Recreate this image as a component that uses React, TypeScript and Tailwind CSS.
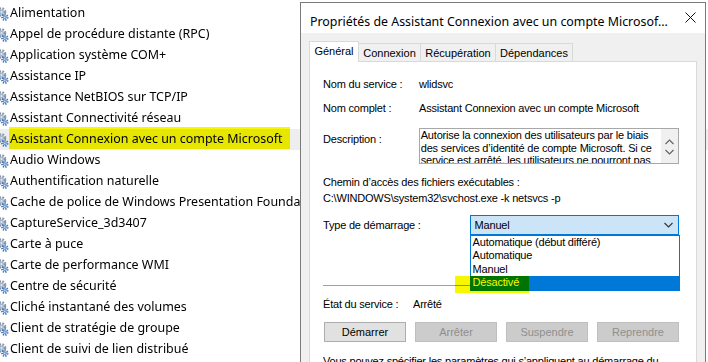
import React from 'react';

const services = [
  'Alimentation',
  'Appel de procédure distante (RPC)',
  'Application système COM+',
  'Assistance IP',
  'Assistance NetBIOS sur TCP/IP',
  'Assistant Connectivité réseau',
  'Assistant Connexion avec un compte Microsoft',
  'Audio Windows',
  'Authentification naturelle',
  'Cache de police de Windows Presentation Foundation 3.0.0.0',
  'CaptureService_3d3407',
  'Carte à puce',
  'Carte de performance WMI',
  'Centre de sécurité',
  'Cliché instantané des volumes',
  'Client de stratégie de groupe',
  'Client de suivi de lien distribué',
];

const startupTypes = ['Automatique (début différé)', 'Automatique', 'Manuel', 'Désactivé'];

const ui = { fontFamily: '"Liberation Sans", Arial, sans-serif' };
const segoe = { fontFamily: '"Noto Sans", "Open Sans", sans-serif' };

function GearIcon() {
  return (
    <svg width="9" height="16" viewBox="0 0 9 16" className="shrink-0">
      <circle cx="1.5" cy="6" r="3.6" fill="none" stroke="#8094ae" strokeWidth="2.4" strokeDasharray="1.6 1.3" />
      <circle cx="1.5" cy="6" r="2.6" fill="#a9b6c8" />
      <circle cx="1.5" cy="6" r="1" fill="#e4e9f0" />
      <circle cx="4.8" cy="11.2" r="2.7" fill="none" stroke="#3f73b8" strokeWidth="2" strokeDasharray="1.3 1.1" />
      <circle cx="4.8" cy="11.2" r="1.9" fill="#6f9ad2" />
      <circle cx="4.8" cy="11.2" r="0.7" fill="#dbe7f6" />
    </svg>
  );
}

function Chevron({ up = false, color = '#606060' }: { up?: boolean; color?: string }) {
  return (
    <svg width="9" height="6" viewBox="0 0 9 6">
      <path d={up ? 'M0.5 5 L4.5 1 L8.5 5' : 'M0.5 1 L4.5 5 L8.5 1'} fill="none" stroke={color} strokeWidth="1.1" />
    </svg>
  );
}

function ServiceList() {
  return (
    <ul className="pt-[3px]" style={segoe}>
      {services.map((name, i) => {
        const selected = i === 6;
        return (
          <li
            key={name}
            className={`relative h-[21px] flex items-center gap-[1px] whitespace-nowrap text-[12.45px] text-black ${
              selected ? 'bg-[#eeeeee]' : ''
            }`}
          >
            <GearIcon />
            <span>{name}</span>
            {selected && (
              <div className="absolute left-[9px] -top-[2px] w-[281px] h-[22px] bg-[#f7f700] mix-blend-multiply" />
            )}
          </li>
        );
      })}
    </ul>
  );
}

function Button({ label, disabled = false }: { label: string; disabled?: boolean }) {
  return (
    <div
      className={`w-[82px] h-[20px] flex items-center justify-center border text-[11px] ${
        disabled ? 'bg-[#cccccc] border-[#bfbfbf] text-[#8f8f8f]' : 'bg-[#e1e1e1] border-[#adadad] text-black'
      }`}
    >
      {label}
    </div>
  );
}

function PropertiesDialog() {
  return (
    <div className="absolute left-[300px] top-[2px] w-[406px] h-[400px] border border-[#7a7a7a] bg-[#f0f0f0]">
      {/* Title bar */}
      <div className="h-[30px] bg-white flex items-center justify-between pl-[9px] pr-[9px]" style={segoe}>
        <span className="mt-[7px] text-[12.4px] leading-[16px] text-black whitespace-nowrap">
          Propriétés de Assistant Connexion avec un compte Microsof...
        </span>
        <svg width="11" height="11" viewBox="0 0 11 11" className="-mt-[1px]">
          <path d="M0.5 0.5 L10.5 10.5 M10.5 0.5 L0.5 10.5" stroke="#111" strokeWidth="1" />
        </svg>
      </div>

      {/* Tabs */}
      <div className="pl-[8px] pr-[8px] pt-[8px]" style={ui}>
        <div className="flex items-end h-[21px] text-[11px] text-black">
          <div className="relative z-10 h-[21px] w-[50px] bg-white border border-b-0 border-[#d9d9d9] flex items-center justify-center pb-[2px]">
            Général
          </div>
          <div className="h-[19px] w-[62px] border border-l-0 border-b-0 border-[#d9d9d9] flex items-center justify-center">
            Connexion
          </div>
          <div className="h-[19px] w-[75px] border border-l-0 border-b-0 border-[#d9d9d9] flex items-center justify-center">
            Récupération
          </div>
          <div className="h-[19px] w-[77px] border border-l-0 border-b-0 border-[#d9d9d9] flex items-center justify-center">
            Dépendances
          </div>
        </div>

        {/* Panel */}
        <div className="-mt-[1px] h-[320px] bg-white border border-[#d9d9d9] pl-[13px] pr-[17px] pt-[14px] text-[11px] tracking-[-0.2px] text-black">
          <div className="flex h-[16px] items-center">
            <span className="w-[96px]">Nom du service :</span>
            <span>wlidsvc</span>
          </div>
          <div className="flex h-[16px] items-center mt-[8px]">
            <span className="w-[96px]">Nom complet :</span>
            <span>Assistant Connexion avec un compte Microsoft</span>
          </div>
          <div className="flex mt-[12px]">
            <span className="w-[96px] mt-[3px]">Description :</span>
            <div className="w-[261px] h-[36px] border border-[#a8a8a8] flex overflow-hidden">
              <div className="flex-1 pl-[1px] leading-[12.6px] whitespace-nowrap overflow-hidden">
                <div>Autorise la connexion des utilisateurs par le biais</div>
                <div>des services d’identité de compte Microsoft. Si ce</div>
                <div>service est arrêté, les utilisateurs ne pourront pas</div>
              </div>
              <div className="w-[17px] bg-[#f0f0f0] flex flex-col items-center pt-[10px] gap-[4px]">
                <Chevron up />
                <Chevron />
              </div>
            </div>
          </div>
          <div className="mt-[10px] leading-[16px]">Chemin d’accès des fichiers exécutables :</div>
          <div className="leading-[16px]">C:\WINDOWS\system32\svchost.exe -k netsvcs -p</div>

          <div className="flex mt-[9px] items-center">
            <span className="w-[147px]">Type de démarrage :</span>
            <div className="relative w-[210px] h-[20px] border border-[#0078d7] bg-[#cce4f7] flex items-center justify-between pl-[4px] pr-[5px]">
              <span>Manuel</span>
              <Chevron color="#333" />
              <div className="absolute z-10 left-[-1px] top-[19px] w-[210px] h-[56px] border border-[#0078d7] bg-white">
                {startupTypes.map((t, i) => (
                  <div
                    key={t}
                    className={`h-[13.4px] leading-[13.4px] pl-[2px] ${i === 3 ? 'bg-[#0078d7] text-white' : ''}`}
                  >
                    {t}
                  </div>
                ))}
              </div>
              <div className="absolute z-20 left-[-16px] top-[60px] w-[74px] h-[17px] bg-[#f7f700] mix-blend-multiply" />
            </div>
          </div>

          <div className="mt-[50px] border-t border-[#a0a0a0]" />

          <div className="flex h-[16px] items-center mt-[10px]">
            <span className="w-[90px]">État du service :</span>
            <span>Arrêté</span>
          </div>

          <div className="flex gap-[9px] mt-[10px] pl-[1px] tracking-normal">
            <Button label="Démarrer" />
            <Button label="Arrêter" disabled />
            <Button label="Suspendre" disabled />
            <Button label="Reprendre" disabled />
          </div>

          <div className="mt-[12px] w-[345px] leading-[14px]">
            Vous pouvez spécifier les paramètres qui s’appliquent au démarrage du service.
          </div>
        </div>
      </div>
    </div>
  );
}

export default function App() {
  return (
    <div className="relative w-[708px] h-[362px] overflow-hidden bg-white">
      <ServiceList />
      <PropertiesDialog />
    </div>
  );
}
